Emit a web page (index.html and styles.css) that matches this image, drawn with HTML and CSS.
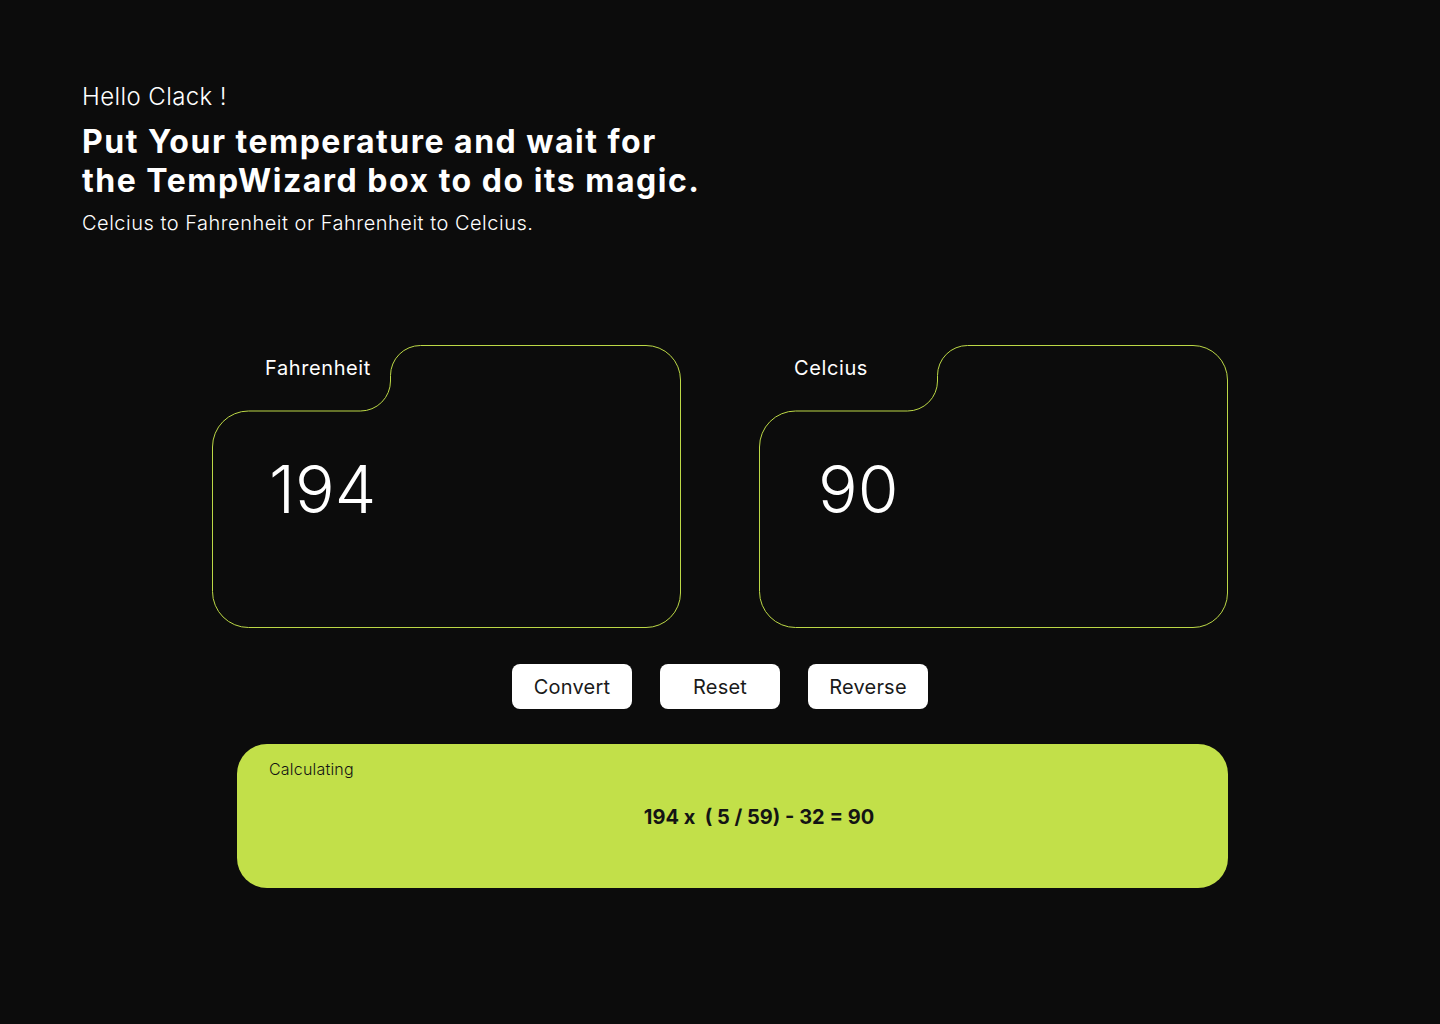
FILE: index.html
```html
<!DOCTYPE html>
<html lang="en">
<head>
<meta charset="utf-8">
<title>TempWizard</title>
<link rel="stylesheet" href="styles.css">
</head>
<body>
<main class="page">
  <header class="intro">
    <p class="hello">Hello Clack !</p>
    <h1 class="title">Put Your temperature and wait for<br>the TempWizard box to do its magic.</h1>
    <p class="sub">Celcius to Fahrenheit or Fahrenheit to Celcius.</p>
  </header>

  <section class="cards">
    <div class="card">
      <svg class="card-frame" width="470" height="284" viewBox="0 0 470 284" aria-hidden="true">
        <path d="M0.5 102 A36 36 0 0 1 36.5 66 L148.5 66 A30 30 0 0 0 178.5 36 L178.5 30.5 A30 30 0 0 1 208.5 0.5 L434 0.5 A34.5 34.5 0 0 1 468.5 35 L468.5 248 A34.5 34.5 0 0 1 434 282.5 L36.5 282.5 A36 36 0 0 1 0.5 246.5 Z" />
      </svg>
      <div class="card-label card-label--f">Fahrenheit</div>
      <div class="card-value">194</div>
    </div>
    <div class="card">
      <svg class="card-frame" width="470" height="284" viewBox="0 0 470 284" aria-hidden="true">
        <path d="M0.5 102 A36 36 0 0 1 36.5 66 L148.5 66 A30 30 0 0 0 178.5 36 L178.5 30.5 A30 30 0 0 1 208.5 0.5 L434 0.5 A34.5 34.5 0 0 1 468.5 35 L468.5 248 A34.5 34.5 0 0 1 434 282.5 L36.5 282.5 A36 36 0 0 1 0.5 246.5 Z" />
      </svg>
      <div class="card-label card-label--c">Celcius</div>
      <div class="card-value card-value--c">90</div>
    </div>
  </section>

  <div class="actions">
    <button class="btn" type="button">Convert</button>
    <button class="btn" type="button">Reset</button>
    <button class="btn" type="button">Reverse</button>
  </div>

  <section class="result">
    <div class="result-label">Calculating</div>
    <div class="result-formula">194 x &nbsp;( 5 / 59) - 32 = 90</div>
  </section>
</main>
</body>
</html>
```

FILE: styles.css
```css
* { box-sizing: border-box; }

html, body {
  margin: 0;
  padding: 0;
  background: #0c0c0c;
}

body {
  font-family: Inter, "Noto Sans", sans-serif;
  color: #ffffff;
  width: 1440px;
  height: 1024px;
  overflow: hidden;
}

.page {
  display: flex;
  flex-direction: column;
}

.intro {
  padding: 82px 0 0 82px;
}

.hello {
  margin: 0;
  font-size: 24px;
  line-height: 30px;
  font-weight: 300;
  letter-spacing: 0.4px;
}

.title {
  margin: 10px 0 0;
  font-size: 32px;
  line-height: 39px;
  font-weight: 700;
  letter-spacing: 1.5px;
}

.sub {
  margin: 10px 0 0;
  font-size: 20px;
  line-height: 26px;
  font-weight: 300;
  letter-spacing: 0.5px;
}

.cards {
  display: flex;
  justify-content: center;
  gap: 78px;
  margin-top: 109px;
}

.card {
  position: relative;
  width: 469px;
  height: 283px;
}

.card-frame {
  position: absolute;
  left: 0;
  top: 0;
  fill: none;
  stroke: #bcd846;
  stroke-width: 1;
}

.card-label {
  position: relative;
  padding-top: 11px;
  font-size: 20px;
  line-height: 24px;
  font-weight: 400;
  letter-spacing: 0.6px;
}

.card-label--f { padding-left: 53px; }
.card-label--c { padding-left: 35px; }

.card-value {
  position: relative;
  margin-top: 69px;
  padding-left: 57px;
  font-size: 66px;
  line-height: 80px;
  font-weight: 300;
}

.card-value--c { padding-left: 59px; }

.actions {
  display: flex;
  justify-content: center;
  gap: 28px;
  margin-top: 36px;
}

.btn {
  width: 120px;
  height: 45px;
  border: none;
  border-radius: 8px;
  background: #ffffff;
  color: #1a1a1a;
  font-family: Inter, "Noto Sans", sans-serif;
  font-size: 20px;
  font-weight: 400;
  letter-spacing: 0.2px;
  padding: 0;
}

.result {
  margin: 35px 0 0 237px;
  width: 991px;
  height: 144px;
  border-radius: 30px;
  background: #c2e049;
  color: #141414;
  padding: 15px 32px 0;
}

.result-label {
  font-size: 16px;
  line-height: 20px;
  font-weight: 300;
  letter-spacing: 0.2px;
}

.result-formula {
  margin-top: 26px;
  padding-left: 53px;
  text-align: center;
  font-size: 20px;
  line-height: 24px;
  font-weight: 700;
}
```
